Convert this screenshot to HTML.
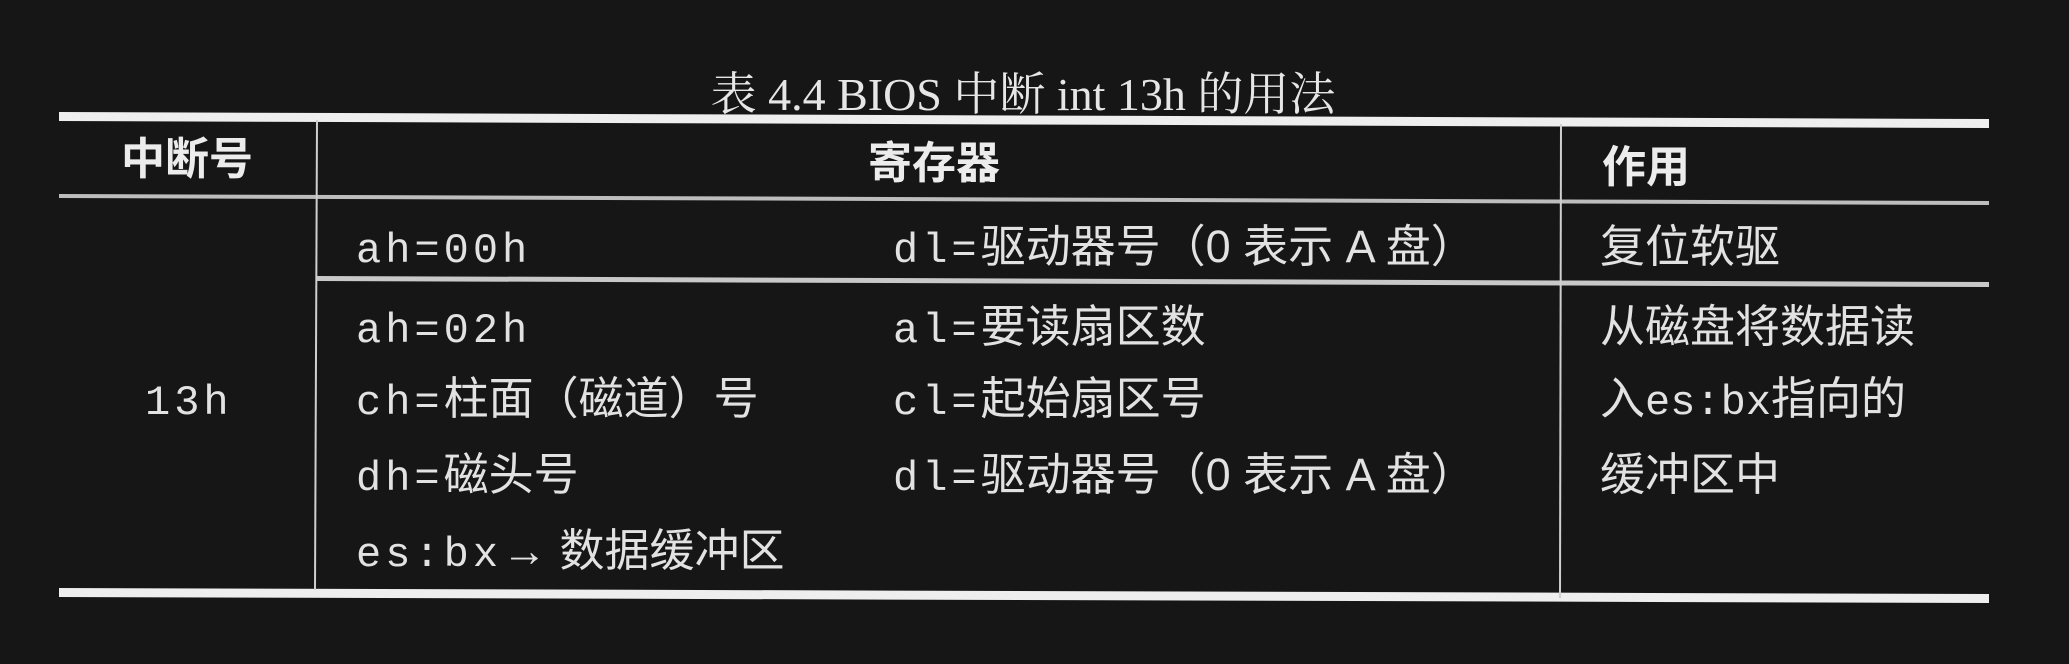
<!DOCTYPE html>
<html><head><meta charset="utf-8"><style>
html,body{margin:0;padding:0;background:#151515;}
svg{display:block}
.c{font-family:"Liberation Serif","Noto Serif CJK SC","Noto Sans CJK SC",serif;fill:#e6e6e6;}
.h{font-family:"Liberation Sans","Noto Sans CJK SC",sans-serif;font-weight:bold;fill:#ececec;font-size:44px}
.m{font-family:"Liberation Mono","Noto Sans CJK SC",monospace;fill:#e2e2e2;font-size:42px;letter-spacing:4px}
.k{font-family:"Liberation Sans","Noto Sans CJK SC",sans-serif;fill:#e2e2e2;font-size:45px}
</style></head><body>
<svg width="2069" height="664" viewBox="0 0 2069 664">
<rect width="2069" height="664" fill="#161616"/>
<text class="c" x="1023" y="110" font-size="46" text-anchor="middle">表 4.4 BIOS 中断 int 13h 的用法</text>
<polygon points="59,112 1989,119 1989,128 59,121" fill="#eeeeee"/>
<polygon points="59,194 1989,201 1989,205 59,198" fill="#bdbdbd"/>
<polygon points="317,276 1989,282 1989,287 317,281" fill="#c8c8c8"/>
<polygon points="59,588 1989,594 1989,603 59,597" fill="#eeeeee"/>
<line x1="317" y1="120" x2="315" y2="590" stroke="#cfcfcf" stroke-width="2"/>
<line x1="1561" y1="124" x2="1560" y2="598" stroke="#cfcfcf" stroke-width="2"/>
<text class="h" x="121" y="174">中断号</text>
<text class="h" x="868" y="178">寄存器</text>
<text class="h" x="1602" y="182">作用</text>
<text class="m" x="356" y="262">ah=00h</text>
<text class="m" x="893" y="262">dl=<tspan class="k" style="letter-spacing:0">驱动器号（0 表示 A 盘）</tspan></text>
<text class="k" x="1600" y="262">复位软驱</text>
<text class="m" x="356" y="342">ah=02h</text>
<text class="m" x="893" y="342">al=<tspan class="k" style="letter-spacing:0">要读扇区数</tspan></text>
<text class="k" x="1600" y="342">从磁盘将数据读</text>
<text class="m" x="145" y="414">13h</text>
<text class="m" x="356" y="414">ch=<tspan class="k" style="letter-spacing:0">柱面（磁道）号</tspan></text>
<text class="m" x="893" y="414">cl=<tspan class="k" style="letter-spacing:0">起始扇区号</tspan></text>
<text class="k" x="1600" y="414">入<tspan class="m" style="letter-spacing:0">es:bx</tspan>指向的</text>
<text class="m" x="356" y="490">dh=<tspan class="k" style="letter-spacing:0">磁头号</tspan></text>
<text class="m" x="893" y="490">dl=<tspan class="k" style="letter-spacing:0">驱动器号（0 表示 A 盘）</tspan></text>
<text class="k" x="1600" y="490">缓冲区中</text>
<text class="m" x="356" y="566">es:bx<tspan class="k" style="letter-spacing:0">→ 数据缓冲区</tspan></text>
</svg>
</body></html>
